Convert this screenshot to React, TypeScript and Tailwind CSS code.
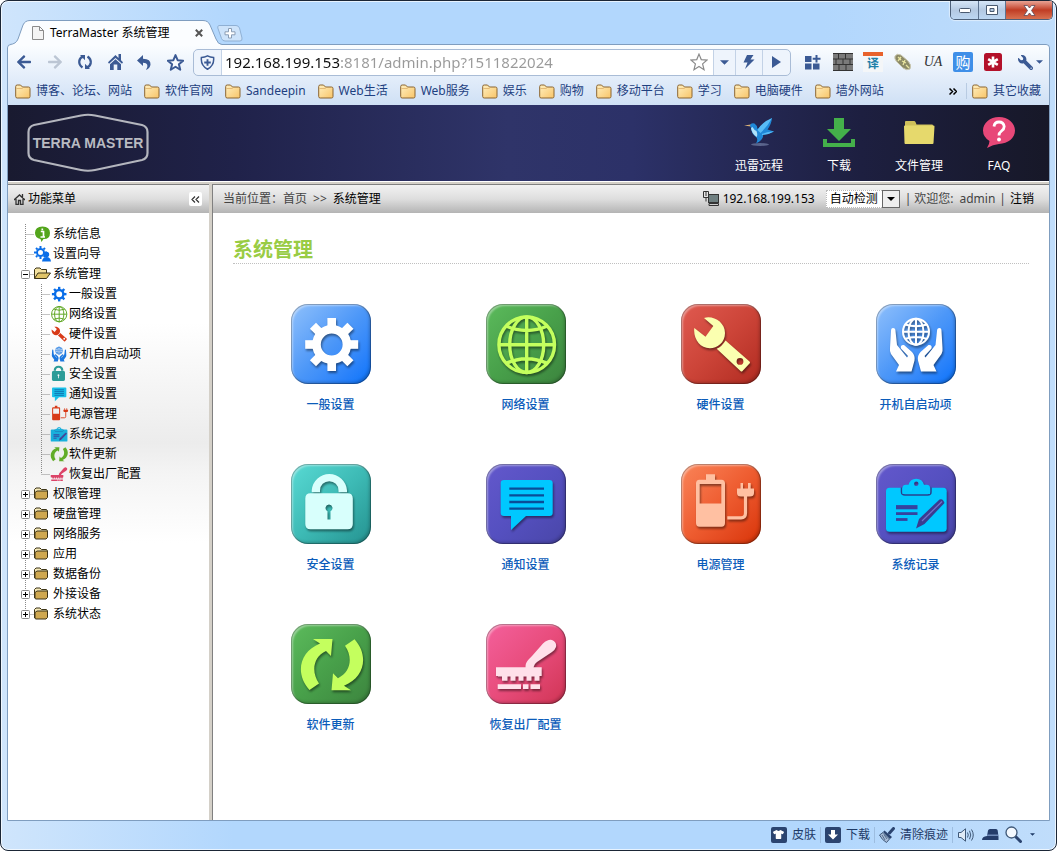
import React from "react";
import { FaArrowLeft, FaArrowRight, FaWrench, FaTshirt } from "react-icons/fa";

type Glyph = (p: { className?: string }) => React.ReactElement;

/* ---------- Application glyphs, drawn on an 80 x 80 grid ---------- */

const G = ({ className, children }: { className?: string; children: React.ReactNode }) => (
  <svg viewBox="0 0 80 80" className={className} aria-hidden="true" fill="currentColor">
    {children}
  </svg>
);

const Gear: Glyph = ({ className }) => (
  <G className={className}>
    <circle cx="40.7" cy="40.5" r="15.2" fill="none" stroke="currentColor" strokeWidth="8.6" />
    {[0, 45, 90, 135, 180, 225, 270, 315].map((a) => (
      <rect key={a} x="36.4" y="14" width="8.6" height="11" transform={`rotate(${a} 40.7 40.5)`} />
    ))}
  </G>
);

const Globe: Glyph = ({ className }) => (
  <G className={className}>
    <g fill="none" stroke="currentColor" strokeWidth="3.4">
      <circle cx="40.7" cy="40.7" r="27.8" />
      <ellipse cx="40.7" cy="40.7" rx="17" ry="27.8" />
      <path d="M40.7 13V68.5M13 40.7H68.5M20 22Q40.7 31 61.4 22M20 59.4Q40.7 50 61.4 59.4" />
    </g>
  </G>
);

const Wrench: Glyph = ({ className }) => (
  <G className={className}>
    <path d="M23 14C32 11 44 18 44 29C44 39 36 44 29 44.3C19 44.5 12 35 13.3 24L24.5 32.7L32.3 22Z" />
    <path
      fillRule="evenodd"
      d="M35.7 44.8Q41 42.500 44.500 36.500L68.500 57.500Q69.500 58.500 68.500 59.500L61.500 67Q60.500 68 59.500 67ZM59 54A3.400 3.400 0 1 0 59 60.800A3.400 3.400 0 1 0 59 54Z"
    />
  </G>
);

const HAND =
  "M15 27Q15 24 17 24Q19.500 24 19.500 27L21 41L31 53.500L32 52L25 44.500Q24 40.500 28 41L36 48Q39.500 52 38.500 56.500L35.500 67.500H20L23 61L15 50Q13.500 47 14 44Z";

const Hands: Glyph = ({ className }) => (
  <G className={className}>
    <g fill="none" stroke="currentColor" strokeWidth="2">
      <circle cx="40" cy="27.7" r="13" />
      <ellipse cx="40" cy="27.7" rx="7.500" ry="13" />
      <path d="M40 14.7V40.7M27 27.7H53M29 20.500Q40 24 51 20.500M29 35Q40 31 51 35" />
    </g>
    <path d={HAND} />
    <path d={HAND} transform="matrix(-1 0 0 1 80.500 0)" />
  </G>
);

const Lock: Glyph = ({ className }) => (
  <G className={className}>
    <path d="M20.700 28.300V26.400A17.700 17.700 0 0 1 56 26.400V28.300H47.500V26.400A9.200 9.200 0 0 0 29 26.400V28.300Z" />
    <path
      fillRule="evenodd"
      d="M19.500 29.300H56.500Q61.800 29.300 61.800 34.500V60Q61.800 65.300 56.500 65.300H19.500Q14.300 65.300 14.300 60V34.500Q14.300 29.300 19.500 29.300ZM38 40.500A3.600 3.600 0 0 0 36.500 47.300V55.500H39.500V47.300A3.600 3.600 0 0 0 38 40.500Z"
    />
  </G>
);

const Chat: Glyph = ({ className }) => (
  <G className={className}>
    <path d="M18 16H63.500Q66.700 16 66.700 19V49Q66.700 52 63.500 52H40L25 66V52H18Q14.700 52 14.700 49V19Q14.700 16 18 16Z" />
    <path d="M23.300 24.700H58M23.300 31.300H58M23.300 38H58M23.300 44.700H58" stroke="#0a4d98" strokeWidth="2.300" />
  </G>
);

const ARROW = "M18.500 66C4 50 8 28 29 19.500L22 15H41.500L40 32L35 27C22 33 20 48 28 59.500Z";

const Refresh: Glyph = ({ className }) => (
  <G className={className}>
    <path d={ARROW} />
    <path d={ARROW} transform="rotate(180 41 40.600)" />
  </G>
);

const Brush: Glyph = ({ className }) => (
  <G className={className}>
    <path d="M10 43.300H39.500C39.500 38 42 36 46 32L57 19.500Q62 15 66 16Q71 18 70 23Q69 26 66 28L51 38Q48 40 47.500 43.300H55.700V52H53.500V56.700H48.500V52.500H45.500V56.700H40.500V52.500H37.500V56.700H32.500V52.500H29.500V56.700H24.500V52.500H21.500V56.700H16V52.500H12V52H10Z" />
    <path d="M11.700 60.300H35V65H11.700ZM37 60.300H42.500V65H37ZM44.500 60.300H54V65H44.500Z" />
  </G>
);

const Battery: Glyph = ({ className }) => (
  <G className={className}>
    <path
      fillRule="evenodd"
      d="M25 10.300H34V15.700H40.500Q44 15.700 44 19.500V59Q44 62.700 40.500 62.700H18.500Q15 62.700 15 59V19.500Q15 15.700 18.500 15.700H25ZM18.700 20V39.500H40.300V20Z"
    />
    <path d="M59.500 19H62V24.500H67V19H69.700V24.500H73V29Q73 32.500 69 32.500H60Q56 32.500 56 29V24.500H59.500Z" />
    <path d="M64.500 32V49Q64.500 53.800 60 53.800H46.300" fill="none" stroke="currentColor" strokeWidth="3.200" />
  </G>
);

const Clipboard: Glyph = ({ className }) => (
  <G className={className}>
    <rect x="10" y="23.700" width="60.700" height="44" rx="3.500" />
    <path d="M25.500 23.500V28Q25.500 31 29 31H51.500Q55 31 55 28V23.500" fill="none" stroke="#28408f" strokeWidth="1.500" />
    <path
      fillRule="evenodd"
      d="M30 20.700H32.500A8 8 0 0 1 48 20.700H50.500Q54 20.700 54 24V30H26.500V24Q26.500 20.700 30 20.700ZM40.300 17.500A2.200 2.200 0 1 0 40.300 21.900A2.200 2.200 0 1 0 40.300 17.500Z"
    />
    <path d="M20 43.200H41.500" stroke="#35439f" strokeWidth="4.200" />
    <path d="M20 49.600H41.500" stroke="#35439f" strokeWidth="2.800" />
    <path d="M20 55.500H31.500" stroke="#35439f" strokeWidth="2.800" />
    <path d="M40 64.500L43 55L63.500 35.500Q67 34 68.500 39L48.500 60Z" fill="#3a3c90" />
    <path d="M46 57L66 37.500" stroke="#7470c8" strokeWidth="1.200" />
  </G>
);

/* ---------- Data ---------- */

const tiles: { label: string; Icon: Glyph; tile: string; ink: string; small: string }[] = [
  { label: "一般设置", Icon: Gear, tile: "from-[#8fc0fb] via-[#4c97f8] to-[#0072fb]", ink: "text-white", small: "text-[#0a6ee8]" },
  { label: "网络设置", Icon: Globe, tile: "from-[#5cbb5c] via-[#48a04a] to-[#3c843e]", ink: "text-[#c4ff5e]", small: "text-[#5aa41c]" },
  { label: "硬件设置", Icon: Wrench, tile: "from-[#e05a50] via-[#cc4438] to-[#b02a20]", ink: "text-[#fbffb0]", small: "text-[#d83a18]" },
  { label: "开机自启动项", Icon: Hands, tile: "from-[#8fc0fb] via-[#4c97f8] to-[#0072fb]", ink: "text-white", small: "text-[#1c78e0]" },
  { label: "安全设置", Icon: Lock, tile: "from-[#58dad4] via-[#3dbab5] to-[#249290]", ink: "text-[#d8fffc]", small: "text-[#2c9c98]" },
  { label: "通知设置", Icon: Chat, tile: "from-[#6358cc] via-[#5550c0] to-[#4946a8]", ink: "text-[#00c8ff]", small: "text-[#18c0e8]" },
  { label: "电源管理", Icon: Battery, tile: "from-[#fa8458] via-[#ee5c30] to-[#d83202]", ink: "text-[#ffc0a2]", small: "text-[#d83a18]" },
  { label: "系统记录", Icon: Clipboard, tile: "from-[#6358cc] via-[#5550c0] to-[#4946a8]", ink: "text-[#00c8ff]", small: "text-[#18b0dc]" },
  { label: "软件更新", Icon: Refresh, tile: "from-[#5cbb5c] via-[#48a04a] to-[#3c843e]", ink: "text-[#c4ff5e]", small: "text-[#62ac28]" },
  { label: "恢复出厂配置", Icon: Brush, tile: "from-[#f4609c] via-[#e84c7c] to-[#d03454]", ink: "text-[#ffe0ea]", small: "text-[#dc4468]" },
];

const folders = ["权限管理", "硬盘管理", "网络服务", "应用", "数据备份", "外接设备", "系统状态"];
const bookmarks = ["博客、论坛、网站", "软件官网", "Sandeepin", "Web生活", "Web服务", "娱乐", "购物", "移动平台", "学习", "电脑硬件", "墙外网站"];

/* ---------- Browser chrome ---------- */

const BookmarkFolder = () => (
  <svg viewBox="0 0 16 15" className="h-[15px] w-4 shrink-0" aria-hidden="true">
    <defs>
      <linearGradient id="bm" x1="0" y1="0" x2="1" y2="1">
        <stop offset="0" stopColor="#fff0c0" />
        <stop offset="1" stopColor="#f8c468" />
      </linearGradient>
    </defs>
    <path d="M.7 12.500V2.500Q.7 1 2.200 1H5.500L7.500 3H13.500Q15 3 15 4.500V12.500Q15 14 13.500 14H2.200Q.7 14 .7 12.500Z" fill="url(#bm)" stroke="#8a6430" />
    <path d="M1.500 4.500H7L8.500 3.500" fill="none" stroke="#d8a860" strokeWidth=".7" />
  </svg>
);

const Bookmark = ({ label }: { label: string }) => (
  <a href="#" className="flex items-center gap-[5px] whitespace-nowrap">
    <BookmarkFolder />
    {label}
  </a>
);

const Caret = ({ className }: { className: string }) => (
  <svg viewBox="0 0 10 5" className={className} fill="currentColor" aria-hidden="true">
    <path d="M0 0H10L5 5Z" />
  </svg>
);

function TitleBar() {
  return (
    <div className="flex h-[43px] items-end justify-between pl-[9px] pr-[3px]">
      <div className="flex items-end">
        <div className="relative -mb-px flex h-[25px] w-[212px] items-center pr-[19px] pl-[22px]">
          <svg viewBox="0 0 212 25" className="absolute inset-0 h-full w-full" preserveAspectRatio="none" aria-hidden="true">
            <path d="M0 24.500Q6 24 8 19L13 5Q15 .5 20 .5H193Q198 .5 200 5L206 19Q208 24.500 212 24.500V25H0Z" fill="#fbfdff" />
            <path d="M0 24.500Q6 24 8 19L13 5Q15 .5 20 .5H193Q198 .5 200 5L206 19Q208 24.500 212 24.500" fill="none" stroke="#7f9dbf" />
          </svg>
          <svg viewBox="0 0 12 14" className="relative h-[14px] w-3" fill="#f4f4f4" stroke="#8b8b8b" aria-hidden="true">
            <path d="M.5 .5H7.500L11.500 4.500V13.500H.5ZM7.500 .5V4.500H11.500" />
          </svg>
          <span className="relative ml-[6px] flex-1 whitespace-nowrap text-xs text-black">TerraMaster 系统管理</span>
          <button aria-label="关闭标签" className="relative text-[#555]">
            <svg viewBox="0 0 8 8" className="h-2 w-2" stroke="currentColor" strokeWidth="2" aria-hidden="true">
              <path d="M.8 .8L7.200 7.200M7.200 .8L.8 7.200" />
            </svg>
          </button>
        </div>
        <button aria-label="新标签" className="mb-[2px] -ml-[5px]">
          <svg viewBox="0 0 26 17" className="h-[17px] w-[26px]" aria-hidden="true">
            <path d="M2 .5H19Q21.500 .5 22.500 3L25 13Q25.500 16 23 16H8Q5.500 16 4.500 13.500L.8 3Q.3 .8 2 .5Z" fill="#cde3fa" stroke="#8fb0d4" />
            <path d="M11.500 3.500H14.500V6.800H18V9.800H14.500V13H11.500V9.800H8V6.800H11.500Z" fill="#fff" stroke="#8a9db4" />
          </svg>
        </button>
      </div>
      <div className="flex h-[19px] self-start overflow-hidden rounded-b-[5px] border border-t-0 border-[#4d6079] shadow-[0_0_1px_1px_#ffffff80]">
        <button aria-label="最小化" className="flex w-7 items-center justify-center border-r border-[#5d7390] bg-linear-to-b from-[#d6e6f7] via-[#b4c9e2] to-[#bcd6f2]">
          <svg viewBox="0 0 12 5" className="h-[5px] w-3" aria-hidden="true"><rect x=".5" y=".5" width="11" height="4" rx="1" fill="#fff" stroke="#4a5a70" /></svg>
        </button>
        <button aria-label="最大化" className="flex w-[27px] items-center justify-center border-r border-[#5d7390] bg-linear-to-b from-[#d6e6f7] via-[#b4c9e2] to-[#bcd6f2]">
          <svg viewBox="0 0 12 10" className="h-[10px] w-3" aria-hidden="true"><path fillRule="evenodd" d="M.5 .5H11.500V9.500H.5ZM4 3.500H8V6.500H4Z" fill="#fff" stroke="#4a5a70" /></svg>
        </button>
        <button aria-label="关闭" className="flex w-[46px] items-center justify-center bg-linear-to-b from-[#e8a294] via-[#c03c24] to-[#d87050]">
          <svg viewBox="0 0 13 11" className="h-[11px] w-[13px]" aria-hidden="true">
            <path d="M1 .5H4.500L6.500 3L8.500 .5H12L8.500 5.500L12 10.500H8.500L6.500 8L4.500 10.500H1L4.500 5.500Z" fill="#fff" stroke="#5d4a58" strokeWidth=".8" />
          </svg>
        </button>
      </div>
    </div>
  );
}

const STAR = "M12 1.500L15 8.800L22.800 9.400L16.800 14.500L18.700 22.200L12 18L5.300 22.200L7.200 14.500L1.200 9.400L9 8.800Z";

function NavBar() {
  return (
    <div className="flex h-[34px] items-center pl-2 pr-[6px] text-[#3b5a94]">
      <div className="flex w-[177px] shrink-0 items-center justify-between pr-[9px]">
        <button aria-label="后退"><FaArrowLeft className="h-4 w-4" /></button>
        <button aria-label="前进" className="text-[#bcc6d4]"><FaArrowRight className="h-4 w-4" /></button>
        <button aria-label="刷新">
          <svg viewBox="0 0 16 16" className="h-4 w-4" fill="none" stroke="currentColor" strokeWidth="2.300" aria-hidden="true">
            <path d="M5.500 13.500Q1.800 11 2.300 7Q2.800 3.700 6 2.600M10.500 2.500Q14.200 5 13.700 9Q13.200 12.300 10 13.400" />
            <path d="M3 1H8V6.200ZM13 15H8V9.800Z" fill="currentColor" stroke="none" />
          </svg>
        </button>
        <button aria-label="主页">
          <svg viewBox="0 0 15 16" className="h-4 w-[15px]" fill="currentColor" aria-hidden="true">
            <path d="M7.500 1L10.500 4V0H13V6.300L15 8.300L14 9.800L7.500 3.900L1 9.800L0 8.300Z" />
            <path d="M7.500 5.300L13 10.200V16H9.300V10.500H5.700V16H2V10.200Z" />
          </svg>
        </button>
        <button aria-label="撤销">
          <svg viewBox="0 0 15 15" className="h-[15px] w-[15px]" fill="currentColor" aria-hidden="true">
            <path d="M0 5.500L6 0V3.700Q14 4 13.500 9.500Q13.200 13 9 15Q11 12 10.300 10Q9.500 7.800 6 7.800V11Z" />
          </svg>
        </button>
        <button aria-label="收藏">
          <svg viewBox="0 0 24 24" className="h-[17px] w-[17px]" fill="#f8fbff" stroke="currentColor" strokeWidth="2.800" strokeLinejoin="round" aria-hidden="true"><path d={STAR} /></svg>
        </button>
      </div>
      <div className="flex h-[27px] min-w-0 flex-1 overflow-hidden rounded-[5px] border border-[#a9bcd6] bg-[#eef4fc]">
        <button aria-label="安全" className="flex w-[28px] items-center justify-center border-r border-[#c3d2e6]">
          <svg viewBox="0 0 16 16" className="h-[15px] w-[15px]" fill="none" stroke="currentColor" strokeWidth="1.600" aria-hidden="true">
            <path d="M8 1Q11 2.600 14.500 2.600Q15.500 11 8 15.200Q.5 11 1.500 2.600Q5 2.600 8 1Z" />
            <path d="M8 4.500V11.500M4.500 8H11.500" strokeWidth="2" />
          </svg>
        </button>
        <div className="min-w-0 flex-1 bg-white">
          <input
            aria-label="地址"
            defaultValue="192.168.199.153:8181/admin.php?1511822024"
            className="h-full w-full bg-[linear-gradient(90deg,#111_118px,#999_118px)] bg-clip-text pl-[3px] text-[15px] text-transparent outline-none"
          />
        </div>
        <button aria-label="加入书签" className="w-[29px] bg-white text-[#8a8a8a]">
          <svg viewBox="0 0 24 24" className="mx-auto h-[18px] w-[18px]" fill="#fff" stroke="currentColor" strokeWidth="1.600" aria-hidden="true"><path d={STAR} /></svg>
        </button>
        <button aria-label="历史地址" className="flex w-[22px] items-center justify-center border-l border-[#c3d2e6]"><Caret className="h-[5px] w-[9px]" /></button>
        <button aria-label="极速模式" className="flex w-[27px] items-center justify-center border-l border-[#c3d2e6]">
          <svg viewBox="0 0 12 14" className="h-[14px] w-3" fill="currentColor" aria-hidden="true"><path d="M4 0H10.500L7.500 4.500H11.500L2 14L4.500 7.500H.5Z" /></svg>
        </button>
        <button aria-label="转到" className="flex w-[28px] items-center justify-center border-l border-[#c3d2e6]">
          <svg viewBox="0 0 9 12" className="h-3 w-[9px]" fill="currentColor" aria-hidden="true"><path d="M0 0L9 6L0 12Z" /></svg>
        </button>
      </div>
      <div className="ml-[12px] flex shrink-0 items-center gap-[10px]">
        <button aria-label="扩展">
          <svg viewBox="0 0 20 20" className="h-5 w-5" fill="currentColor" aria-hidden="true"><path d="M2 4H8.500V10H2ZM2 11.500H8.500V17.500H2ZM10 11.500H16.500V17.500H10ZM12.500 3H14.500V5.700H17.500V7.700H14.500V10.500H12.500V7.700H9.700V5.700H12.500Z" /></svg>
        </button>
        <button aria-label="防火墙">
          <svg viewBox="0 0 20 20" className="h-5 w-5" aria-hidden="true">
            <rect y="1" width="20" height="18" fill="#333" />
            <path d="M0 2H5V6.500H0ZM6 2H12V6.500H6ZM13 2H20V6.500H13ZM0 7.500H2.500V12H0ZM3.500 7.500H9.500V12H3.500ZM10.500 7.500H16.500V12H10.500ZM17.500 7.500H20V12H17.500ZM0 13H5.500V18H0ZM6.500 13H12.500V18H6.500ZM13.500 13H20V18H13.500Z" fill="#7a7a7a" />
          </svg>
        </button>
        <button aria-label="翻译" className="flex h-5 w-5 flex-col items-center justify-between bg-[#f4f6f8]">
          <span className="h-1 w-full bg-[#e8622c]" />
          <span className="text-xs leading-4 font-bold text-[#1f7fa8]">译</span>
        </button>
        <button aria-label="标签">
          <svg viewBox="0 0 20 20" className="h-5 w-5" aria-hidden="true">
            <path d="M2 4Q4 1 8 3L15 9Q19 13 17 17Q14 19 10 16L4 10Q1 7 2 4Z" fill="#8c8a66" stroke="#c9c7b0" />
            <path d="M5 5L8 8M8 5L5 9M9 9L13 11M12 8L10 13M13 13L16 16" stroke="#e8e4a0" strokeWidth="1.300" />
          </svg>
        </button>
        <button aria-label="UA" className="w-5 text-center font-['Liberation_Serif',serif] text-sm italic text-[#333]">UA</button>
        <button aria-label="购物" className="flex h-5 w-5 items-center justify-center rounded-[2px] bg-[#3f8fe8] text-[15px] leading-5 text-white">购</button>
        <button aria-label="密码" className="flex h-[18px] w-5 items-center justify-center">
          <svg viewBox="0 0 18 18" className="h-[18px] w-[18px]" aria-hidden="true">
            <rect width="18" height="18" rx="2.500" fill="#b3112a" />
            <path d="M9 3.500V14.500M4.200 6.200L13.800 11.800M13.800 6.200L4.200 11.800" stroke="#fff" strokeWidth="2.600" />
          </svg>
        </button>
        <button aria-label="工具" className="ml-[5px] flex items-center gap-[3px]">
          <FaWrench className="h-[15px] w-[15px] -scale-x-100" />
          <Caret className="h-1 w-[7px]" />
        </button>
      </div>
    </div>
  );
}

function BookmarkBar() {
  return (
    <div className="flex h-[26px] items-center justify-between overflow-hidden pb-[2px] pl-[7px] pr-2 text-xs text-[#1e3f80]">
      <div className="flex gap-3">
        {bookmarks.map((b) => (
          <Bookmark key={b} label={b} />
        ))}
      </div>
      <div className="flex items-center">
        <button aria-label="更多书签" className="mr-[9px]">
          <svg viewBox="0 0 8 7" className="h-[7px] w-2" fill="none" stroke="#000" strokeWidth="1.500" aria-hidden="true"><path d="M.5 .5L3.500 3.500L.5 6.500M4.500 .5L7.500 3.500L4.500 6.500" /></svg>
        </button>
        <span className="mr-[5px] h-4 w-px bg-[#b8cbe2]" />
        <Bookmark label="其它收藏" />
      </div>
    </div>
  );
}

/* ---------- Application ---------- */

function Logo() {
  return (
    <svg viewBox="0 0 122 60" className="h-[60px] w-[122px]" role="img" aria-label="TERRA MASTER">
      <path
        d="M7 12L54 2.500Q61 1 68 2.500L115 12Q120.500 13.500 120.500 19V40Q120.500 45.500 115 47L68 57Q61 58.500 54 57L7 47Q1.500 45.500 1.500 40V19Q1.500 13.500 7 12Z"
        fill="none"
        stroke="#b4b6be"
        strokeWidth="2.200"
      />
      <text x="61" y="35" textAnchor="middle" fill="#b9bbc2" className="font-['Liberation_Sans',sans-serif] text-sm font-bold">
        TERRA MASTER
      </text>
    </svg>
  );
}

const headerLinks: { label: string; art: React.ReactElement }[] = [
  {
    label: "迅雷远程",
    art: (
      <svg viewBox="0 0 32 32" className="h-8 w-8" aria-hidden="true">
        <ellipse cx="17" cy="28.500" rx="9" ry="1.500" fill="#5a648c" />
        <path d="M1 9.500L8 8.500V10.500Z" fill="#d8b078" />
        <path d="M7 9.500Q8 6.500 11.500 7.500Q14 9 14.500 13L29 2Q28.500 8 24.500 13.500L31 15.500Q26 18.500 20 19Q21 23 13 27.500Q15.500 23 13 21Q8 17 8 12Z" fill="#1f88d8" />
        <path d="M14.500 14Q19 6 29 2Q25 10 17.500 17ZM19 18Q25 15 31 15.500Q26 18.500 19 19Z" fill="#58bcf6" />
        <path d="M8 12Q8.500 17 13.500 21Q15 19 13.500 15Q11 14 9.500 11Z" fill="#b0e2fa" />
      </svg>
    ),
  },
  {
    label: "下载",
    art: (
      <svg viewBox="0 0 32 32" className="h-8 w-8" fill="#44b04a" aria-hidden="true">
        <path d="M11 2H21V13H28L16 25L4 13H11Z" />
        <path d="M0 23H4V27H28V23H32V31H0Z" />
      </svg>
    ),
  },
  {
    label: "文件管理",
    art: (
      <svg viewBox="0 0 32 32" className="h-8 w-8" aria-hidden="true">
        <path d="M2 26V6Q2 5 3 5H11Q12 5 12.500 6L13.500 8.500H29Q30 8.500 30 9.500V26Z" fill="#cfc05a" />
        <path d="M1 10.500Q1 9.500 2 9.500H30.500Q31.500 9.500 31.500 10.500L30.500 27Q30.500 28 29.500 28H2.500Q1.500 28 1.500 27Z" fill="#e6d96c" />
      </svg>
    ),
  },
  {
    label: "FAQ",
    art: (
      <svg viewBox="0 0 32 32" className="h-8 w-8" aria-hidden="true">
        <path d="M16 1C25 1 32 7 32 14.500S25 27.500 16 28Q10 28.500 4 32Q6.500 28 6.500 25Q0 21 0 14.500C0 7 7 1 16 1Z" fill="#e84878" />
        <path d="M11 10.500Q11.500 6 16 6T21.200 10.500Q21.200 13 18.500 15Q16 16.800 16 19.500" fill="none" stroke="#fff" strokeWidth="2.800" />
        <circle cx="16" cy="23.500" r="1.900" fill="#fff" />
      </svg>
    ),
  },
];

function Header() {
  return (
    <header className="flex h-[76px] items-center justify-between bg-[linear-gradient(90deg,#191a30_0%,#20224a_22%,#2f3469_48%,#2c3168_60%,#1d1f40_82%,#171828_100%)] pl-[19px] pr-[10px]">
      <Logo />
      <nav className="flex pt-1">
        {headerLinks.map(({ label, art }) => (
          <a key={label} href="#" className="flex w-20 flex-col items-center gap-[10px] text-xs text-white">
            {art}
            {label}
          </a>
        ))}
      </nav>
    </header>
  );
}

/* Dotted tree connectors; `box` draws the expand or collapse handle. */
function Guide({ nested, last, box }: { nested?: boolean; last?: boolean; box?: "+" | "-" }) {
  const w = nested ? 42 : 26;
  const x = nested ? 33.5 : 17.5;
  return (
    <svg width={w} height="20" viewBox={`0 0 ${w} 20`} className="shrink-0" fill="none" stroke="#8a8a8a" aria-hidden="true">
      <g strokeDasharray="1 1">
        {nested && <path d="M17.500 0V20" />}
        <path d={`M${x} 0V${last ? 10 : 20}M${x} 10.500H${w}`} />
      </g>
      {box && (
        <>
          <rect x="13.500" y="6.500" width="8" height="8" rx="1" fill="#fff" />
          <path d={box === "+" ? "M15 10.500H20M17.500 8V13" : "M15 10.500H20"} stroke="#000" />
        </>
      )}
    </svg>
  );
}

const TreeFolder = ({ open }: { open?: boolean }) => (
  <svg viewBox="0 0 17 14" className="h-[14px] w-[17px]" stroke="#3c3418" aria-hidden="true">
    {open ? (
      <>
        <path d="M.5 11.500V2.500L2 1H6L7.500 2.500H12.500V6" fill="#f4e2a0" />
        <path d="M.5 11.500L4 6H16.500L12.500 11.500Z" fill="#e0c468" />
      </>
    ) : (
      <>
        <path d="M.5 11V2.500L2 1H6L7.500 2.500H12.500L13.500 4" fill="#f4e8b8" />
        <path d="M1 11.500V5.500L3 4H13.500V10.500L12 12H2Z" fill="#cfa850" />
      </>
    )}
  </svg>
);

function Row({ label, guide, icon }: { label: string; guide: React.ReactNode; icon: React.ReactNode }) {
  return (
    <a href="#" className="flex h-5 items-center whitespace-nowrap">
      {guide}
      <span className="flex w-[18px] shrink-0">{icon}</span>
      <span className="ml-[1px]">{label}</span>
    </a>
  );
}

function Sidebar() {
  return (
    <aside className="flex w-[201px] shrink-0 flex-col text-xs text-black">
      <h2 className="flex h-[29px] items-center border-t border-[#808080] bg-linear-to-b from-[#f2f2f2] via-[#dedede] to-[#b4b4b4] pl-[6px] pr-[7px]">
        <svg viewBox="0 0 11 11" className="h-[11px] w-[11px]" fill="none" stroke="#333" aria-hidden="true">
          <path d="M0 6L5.500 1L11 6M2 5V10.500H4.500V6.500H6.500V10.500H9V5M8.500 0V4" strokeWidth="1.300" />
        </svg>
        <span className="ml-[3px] flex-1">功能菜单</span>
        <button aria-label="收起菜单" className="flex h-[14px] w-[13px] items-center justify-center rounded-[2px] bg-white text-[#333]">
          <svg viewBox="0 0 9 7" className="h-[7px] w-[9px]" fill="none" stroke="currentColor" aria-hidden="true"><path d="M4 .5L1 3.500L4 6.500M8 .5L5 3.500L8 6.500" strokeWidth="1.200" /></svg>
        </button>
      </h2>
      <nav className="flex-1 bg-[linear-gradient(180deg,#fff_0,#fff_110px,#ececec_230px,#f4f4f4_260px,#fff_330px)] pt-[11px]">
        <Row
          label="系统信息"
          guide={<Guide />}
          icon={
            <svg viewBox="0 0 16 16" className="h-4 w-[17px]" aria-hidden="true">
              <path d="M8 .5Q15.500 .8 15.500 7T9 13L7 16L6 13Q.5 12 .5 7Q.5 .8 8 .5Z" fill="#53a51c" />
              <path d="M6.300 5.500H9V11M6 11H10.500M7.800 2.500V4.300" stroke="#fff" strokeWidth="1.700" fill="none" />
            </svg>
          }
        />
        <Row
          label="设置向导"
          guide={<Guide />}
          icon={
            <svg viewBox="0 0 17 16" className="h-4 w-[17px] text-[#0a6ee8]" fill="currentColor" aria-hidden="true">
              <circle cx="6.500" cy="6.500" r="3.500" fill="none" stroke="currentColor" strokeWidth="2" />
              <path d="M6.500 0V13M0 6.500H13M2 2L11 11M11 2L2 11" stroke="currentColor" strokeWidth="2" strokeDasharray="2 9 2 9" />
              <circle cx="12.500" cy="8.500" r="2.700" />
              <path d="M8 15.500Q8.500 11 12.500 11T17 15.500Z" />
            </svg>
          }
        />
        <Row label="系统管理" guide={<Guide box="-" />} icon={<TreeFolder open />} />
        {tiles.map(({ label, Icon, small }, i) => (
          <Row
            key={label}
            label={label}
            guide={<Guide nested last={i === tiles.length - 1} />}
            icon={
              <span className={small}>
                <Icon className="-m-[2px] h-[22px] w-[22px]" />
              </span>
            }
          />
        ))}
        {folders.map((label, i) => (
          <Row key={label} label={label} guide={<Guide box="+" last={i === folders.length - 1} />} icon={<TreeFolder />} />
        ))}
      </nav>
    </aside>
  );
}

function Content() {
  return (
    <main className="min-w-0 flex-1 bg-white text-xs">
      <div className="flex h-[29px] items-center justify-between border-t border-[#808080] bg-linear-to-b from-[#f2f2f2] via-[#dedede] to-[#b4b4b4] pl-[10px] pr-[15px] text-[#444]">
        <p className="flex gap-[6px]">
          <span>当前位置：<a href="#">首页</a></span>
          <span>&gt;&gt;</span>
          <a href="#" className="text-black">系统管理</a>
        </p>
        <div className="flex items-center">
          <svg viewBox="0 0 17 16" className="mr-[3px] h-4 w-[17px]" fill="none" stroke="#333" aria-hidden="true">
            <rect x="5.500" y="3.500" width="10" height="8" fill="#6f7f80" />
            <path d="M.5 .5H5.500V6.500H.5ZM3 6.500V10.500M3 .5V5M6 14.500H15.500V12.500H6Z" />
          </svg>
          <span className="text-black">192.168.199.153</span>
          <div className="relative ml-[11px] flex">
            <select aria-label="语言" className="h-[18px] w-[74px] appearance-none border border-dotted border-[#bbb] bg-white pl-[3px] text-xs leading-4 text-black outline-none">
              <option>自动检测</option>
            </select>
            <span className="pointer-events-none absolute top-0 right-0 flex h-[18px] w-[18px] items-center justify-center border border-[#666] bg-[#eee] text-black">
              <Caret className="h-1 w-2" />
            </span>
          </div>
          <span className="ml-[5px]">|</span>
          <span className="ml-[3px]">欢迎您:</span>
          <span className="ml-[6px]">admin</span>
          <span className="mx-1">|</span>
          <a href="#" className="text-black">注销</a>
        </div>
      </div>
      <div className="px-5 pt-[25px]">
        <h1 className="border-b border-dotted border-[#c0c0c0] pb-px text-xl leading-6 font-bold text-[#99cc44]">系统管理</h1>
        <div className="mt-10 grid grid-cols-[repeat(auto-fill,195px)]">
          {tiles.map(({ label, Icon, tile, ink }) => (
            <a key={label} href="#" className="flex h-40 flex-col items-center gap-[13px] font-medium text-[#0b5cba]">
              <span className={`flex size-20 rounded-[17px] bg-linear-to-br shadow-[inset_0_0_0_1px_#00000040,inset_2px_2px_2px_#ffffff66,inset_-2px_-2px_3px_#00000033] ${tile} ${ink}`}>
                <Icon className="size-20 drop-shadow-[1px_2px_1px_#00000070]" />
              </span>
              {label}
            </a>
          ))}
        </div>
      </div>
    </main>
  );
}

function StatusBar() {
  const sep = <span className="mx-[4px] h-4 w-px bg-[#9dbde0]" />;
  return (
    <footer className="flex h-[29px] items-center justify-end pr-[21px] pb-[2px] text-xs text-[#1e3a66]">
      <button className="flex items-center gap-[5px]">
        <span className="flex size-4 items-center justify-center rounded-[2px] bg-[#2b4470] text-white"><FaTshirt className="h-[9px] w-[11px]" /></span>
        皮肤
      </button>
      {sep}
      <button className="flex items-center gap-[5px]">
        <span className="flex size-4 items-center justify-center rounded-[2px] bg-[#2b4470]">
          <svg viewBox="0 0 10 10" className="size-[10px]" fill="#fff" aria-hidden="true"><path d="M3 0H7V4.500H10L5 9.500L0 4.500H3Z" /></svg>
        </span>
        下载
      </button>
      {sep}
      <button className="flex items-center gap-[5px]">
        <svg viewBox="0 0 16 16" className="size-4" aria-hidden="true">
          <path d="M14.500 1.500L10.500 6" stroke="#2b4470" strokeWidth="3" strokeLinecap="round" />
          <path d="M5.500 3.500L13 10L11 12L4 5Z" fill="#2b4470" />
          <path d="M4 5.500L10.500 12L7.500 15.500Q3 13 .5 8Z" fill="#a9bdd8" stroke="#3f5878" />
          <path d="M3 8L6 13M5 7.500L8 12" stroke="#3f5878" strokeWidth=".8" />
        </svg>
        清除痕迹
      </button>
      {sep}
      <button aria-label="声音" className="ml-px">
        <svg viewBox="0 0 16 14" className="h-[14px] w-4" fill="#dfeaf6" stroke="#3f5878" aria-hidden="true">
          <path d="M.5 4.500H3L7.500 .8V13.200L3 9.500H.5Z" />
          <path d="M9.500 4.500Q11 7 9.500 9.500M11.500 2.800Q14 7 11.500 11.200M13.500 1.500Q17 7 13.500 12.500" fill="none" />
        </svg>
      </button>
      <button aria-label="助手" className="ml-2">
        <svg viewBox="0 0 17 11" className="h-[11px] w-[17px]" fill="#243c6a" aria-hidden="true"><path d="M6 1.500Q6.500 0 8 0H14Q15.500 0 15.700 1.500L16.500 8V11H0Q0 7.500 5 7Z" /><path d="M5.200 5.500H16L16.200 7H5Z" fill="#6f8ab8" /></svg>
      </button>
      <button aria-label="缩放" className="ml-[6px] flex items-center gap-2">
        <svg viewBox="0 0 17 17" className="size-[17px]" aria-hidden="true">
          <path d="M10.500 10.500L15.500 15.500" stroke="#2b4470" strokeWidth="3" strokeLinecap="round" />
          <circle cx="6.500" cy="6.500" r="5.500" fill="#f4f9ff" stroke="#3f5878" strokeWidth="1.300" />
        </svg>
        <Caret className="h-[3px] w-[5px]" />
      </button>
    </footer>
  );
}

export default function App() {
  return (
    <div className="flex min-h-screen flex-col overflow-hidden rounded-lg border border-[#1b2636] bg-[linear-gradient(90deg,#cfe5fc_0%,#b2d7fd_22%,#b2d7fd_78%,#c0ddfb_100%)] font-['Noto_Sans','Noto_Sans_CJK_SC',sans-serif] shadow-[inset_0_0_0_1px_#ffffffb0]">
      <TitleBar />
      <div className="mx-[6px] flex flex-1 flex-col rounded-t-[4px] border border-[#7f9dbf] bg-[#d3e3f6]">
        <div className="rounded-t-[4px] bg-linear-to-b from-[#fbfdff] to-[#cfe0f5]">
          <NavBar />
          <BookmarkBar />
        </div>
        <Header />
        <div className="flex flex-1 flex-col border-t border-white bg-[#d4d0c8] pt-[2px]">
          <div className="flex flex-1">
            <Sidebar />
            <div className="w-1 border-r border-[#808080] bg-[#d4d0c8]" />
            <Content />
          </div>
        </div>
      </div>
      <StatusBar />
    </div>
  );
}
